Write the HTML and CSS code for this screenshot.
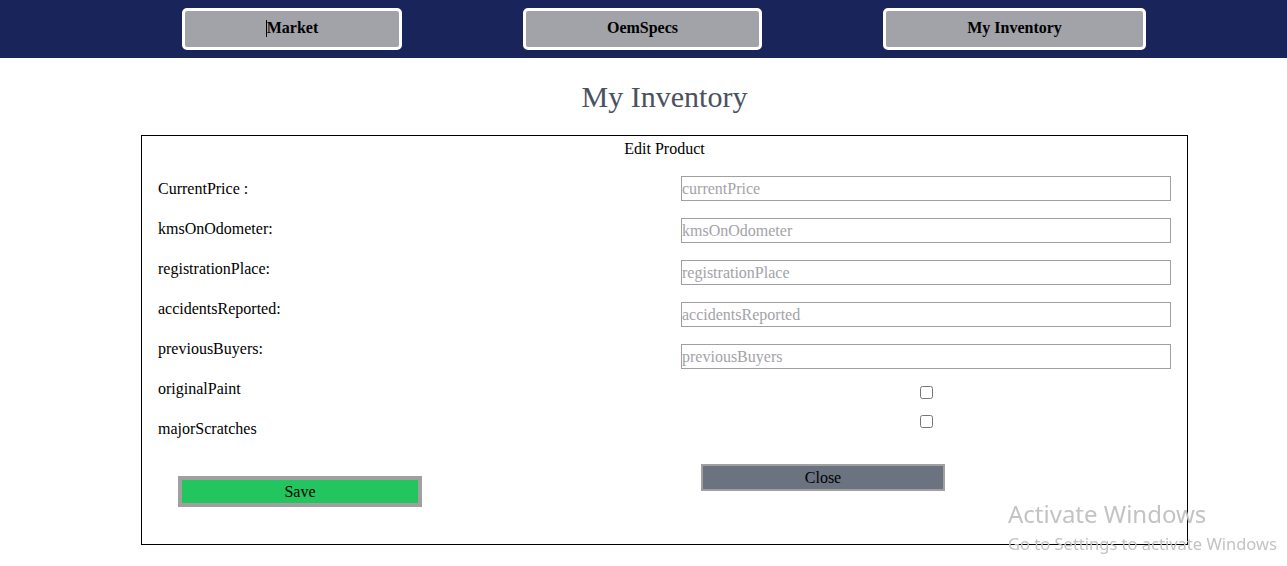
FILE: index.html
```html
<!DOCTYPE html>
<html>
<head>
<meta charset="utf-8">
<title>My Inventory</title>
<link rel="stylesheet" href="styles.css">
</head>
<body>
<nav class="topnav">
  <button class="nav-btn nav-market"><span class="caret"></span>Market</button>
  <button class="nav-btn nav-oem">OemSpecs</button>
  <button class="nav-btn nav-inv">My Inventory</button>
</nav>
<main class="page">
  <h1 class="title">My Inventory</h1>
  <section class="edit-box">
    <div class="edit-head">Edit Product</div>
    <div class="edit-cols">
      <div class="col-left">
        <div class="label">CurrentPrice :</div>
        <div class="label">kmsOnOdometer:</div>
        <div class="label">registrationPlace:</div>
        <div class="label">accidentsReported:</div>
        <div class="label">previousBuyers:</div>
        <div class="label">originalPaint</div>
        <div class="label">majorScratches</div>
        <button class="btn-save">Save</button>
      </div>
      <div class="col-right">
        <input class="field" type="text" placeholder="currentPrice">
        <input class="field" type="text" placeholder="kmsOnOdometer">
        <input class="field" type="text" placeholder="registrationPlace">
        <input class="field" type="text" placeholder="accidentsReported">
        <input class="field" type="text" placeholder="previousBuyers">
        <div class="check-row"><input class="check" type="checkbox"></div>
        <div class="check-row check-row2"><input class="check" type="checkbox"></div>
        <button class="btn-close">Close</button>
      </div>
    </div>
  </section>
</main>
<div class="watermark">
  <div class="wm-big">Activate Windows</div>
  <div class="wm-small">Go to Settings to activate Windows</div>
</div>
</body>
</html>
```

FILE: styles.css
```css
html, body {
  margin: 0;
  padding: 0;
  background: #ffffff;
  font-family: "Liberation Serif", "Times New Roman", serif;
  font-size: 16px;
  color: #000;
  overflow: hidden;
}

.topnav {
  height: 58px;
  background: #19245a;
  display: flex;
  align-items: flex-start;
  padding-left: 182px;
  gap: 121px;
  box-sizing: border-box;
  padding-top: 8px;
}

.nav-btn {
  height: 42px;
  background: #a2a2a9;
  border: 3px solid #ffffff;
  border-radius: 5px;
  font-family: "Liberation Serif", "Times New Roman", serif;
  font-weight: bold;
  font-size: 16px;
  color: #000;
  padding: 0 0 2px 0;
  box-sizing: border-box;
}
.nav-market { width: 220px; }
.nav-oem { width: 239px; }
.nav-inv { width: 263px; }

.caret {
  display: inline-block;
  width: 1px;
  height: 17px;
  background: #000;
  vertical-align: -4px;
}

.page {
  padding-top: 22px;
}

.title {
  margin: 0 0 21px 141px;
  width: 1047px;
  text-align: center;
  font-weight: normal;
  font-size: 30px;
  line-height: 34px;
  color: #4a5260;
}

.edit-box {
  margin-left: 141px;
  width: 1047px;
  height: 410px;
  box-sizing: border-box;
  border: 1px solid #000;
  padding: 3px 16px 0 16px;
}

.edit-head {
  text-align: center;
  line-height: 20px;
  height: 20px;
}

.edit-cols {
  margin-top: 10px;
  display: grid;
  grid-template-columns: 1fr 1fr;
  column-gap: 33px;
}

.col-left {
  display: flex;
  flex-direction: column;
  align-items: flex-start;
}

.label {
  height: 40px;
  line-height: 40px;
}

.btn-save {
  margin-top: 27px;
  margin-left: 20px;
  width: 244px;
  height: 31px;
  background: #22c55e;
  border: 4px solid #a0a0a0;
  font-family: "Liberation Serif", "Times New Roman", serif;
  font-size: 16px;
  color: #000;
  padding: 0;
  box-sizing: border-box;
}

.col-right {
  display: flex;
  flex-direction: column;
  align-items: stretch;
  padding-top: 7px;
}

.field {
  height: 25px;
  margin: 0 0 17px 0;
  border: 1px solid #a0a0a0;
  padding: 1px 0 0 0;
  box-sizing: border-box;
  font-family: "Liberation Serif", "Times New Roman", serif;
  font-size: 16px;
  outline: none;
}
.field::placeholder {
  color: #a3a3a8;
}

.check-row {
  display: flex;
  justify-content: center;
  height: 13px;
}
.check-row2 {
  margin-top: 16px;
}

.check {
  width: 13px;
  height: 13px;
  margin: 0;
}

.btn-close {
  margin-top: 36px;
  margin-left: 20px;
  align-self: flex-start;
  width: 244px;
  height: 27px;
  background: #6b7280;
  border: 2px solid #a0a0a0;
  font-family: "Liberation Serif", "Times New Roman", serif;
  font-size: 16px;
  color: #000;
  padding: 0;
  box-sizing: border-box;
}

.watermark {
  position: fixed;
  left: 1008px;
  top: 498px;
  color: #c3c3c3;
  font-family: "Noto Sans", "Open Sans", sans-serif;
  white-space: nowrap;
  pointer-events: none;
}
.wm-big {
  font-size: 24px;
  line-height: 32px;
}
.wm-small {
  font-size: 16.5px;
  line-height: 28px;
}
```
